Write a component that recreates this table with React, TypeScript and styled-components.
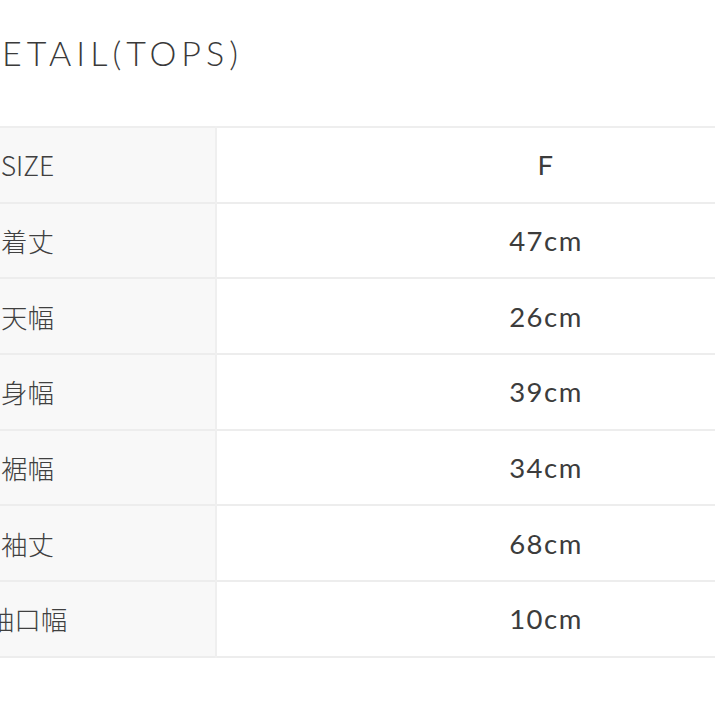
import React from 'react';
import styled, { createGlobalStyle } from 'styled-components';

const GlobalStyle = createGlobalStyle`
  html, body {
    margin: 0;
    padding: 0;
    background: #ffffff;
  }
`;

const Page = styled.div`
  width: 715px;
  height: 715px;
  overflow: hidden;
  background: #ffffff;
`;

const Heading = styled.h1`
  margin: 0;
  padding: 33px 0 0 2px;
  height: 126px;
  box-sizing: border-box;
  font-family: 'Lato', 'Liberation Sans', sans-serif;
  font-weight: 300;
  font-size: 34px;
  line-height: 40px;
  letter-spacing: 5px;
  color: #3a3a3a;
`;

const Table = styled.table`
  margin-left: -160px;
  width: 1035px;
  border-collapse: collapse;
  border-top: 2px solid #eeeeee;
`;

const Row = styled.tr`
  height: 75.7px;
  border-bottom: 2px solid #ededed;
`;

const Label = styled.th`
  width: 375px;
  padding: 0;
  background: #f8f8f8;
  border-right: 2px solid #efefef;
  text-align: center;
  font-family: 'Noto Sans CJK JP', 'Noto Sans', sans-serif;
  font-weight: 300;
  font-size: 26.5px;
  color: #404040;
`;

const Value = styled.td`
  padding: 0;
  text-align: center;
  font-family: 'Lato', 'Liberation Sans', sans-serif;
  font-size: 27.5px;
  letter-spacing: 1.5px;
  color: #3c3c3c;
`;

const rows: [string, string][] = [
  ['SIZE', 'F'],
  ['着丈', '47cm'],
  ['天幅', '26cm'],
  ['身幅', '39cm'],
  ['裾幅', '34cm'],
  ['袖丈', '68cm'],
  ['袖口幅', '10cm'],
];

const App = () => (
  <>
    <GlobalStyle />
    <Page>
      <Heading>ETAIL(TOPS)</Heading>
      <Table>
        <tbody>
          {rows.map(([label, value]) => (
            <Row key={label}>
              <Label>{label}</Label>
              <Value>{value}</Value>
            </Row>
          ))}
        </tbody>
      </Table>
    </Page>
  </>
);

export default App;
